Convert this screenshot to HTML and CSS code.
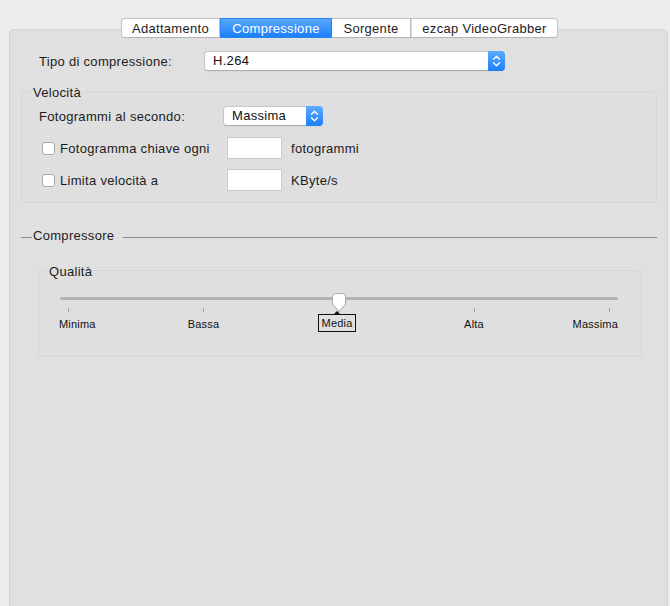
FILE: index.html
```html
<!DOCTYPE html>
<html lang="it">
<head>
<meta charset="utf-8">
<title>Compressione</title>
<link rel="stylesheet" href="styles.css">
</head>
<body>
<div class="window">
  <div class="tab-bar">
    <div class="tab t1">Adattamento</div>
    <div class="tab t2 active">Compressione</div>
    <div class="tab t3">Sorgente</div>
    <div class="tab t4">ezcap VideoGrabber</div>
  </div>
  <div class="panel">
    <div class="row-top">
      <span class="lbl-top">Tipo di compressione:</span>
      <div class="popup popup-wide">
        <span class="popup-text">H.264</span>
        <span class="stepper"><svg width="17" height="20" viewBox="0 0 17 20"><path d="M5.5 8.3 L8.5 5.3 L11.5 8.3 M5.5 11.7 L8.5 14.7 L11.5 11.7" fill="none" stroke="#fff" stroke-width="1.3" stroke-linecap="round" stroke-linejoin="round"/></svg></span>
      </div>
    </div>

    <fieldset class="group group-speed">
      <legend class="g-legend leg-speed">Velocità</legend>
      <div class="row-fps">
        <span class="lbl-fps">Fotogrammi al secondo:</span>
        <div class="popup popup-small">
          <span class="popup-text">Massima</span>
          <span class="stepper"><svg width="17" height="20" viewBox="0 0 17 20"><path d="M5.5 8.3 L8.5 5.3 L11.5 8.3 M5.5 11.7 L8.5 14.7 L11.5 11.7" fill="none" stroke="#fff" stroke-width="1.3" stroke-linecap="round" stroke-linejoin="round"/></svg></span>
        </div>
      </div>
      <div class="row-check first">
        <span class="check"><span class="box"></span>Fotogramma chiave ogni</span>
        <span class="field"></span>
        <span class="unit">fotogrammi</span>
      </div>
      <div class="row-check second">
        <span class="check"><span class="box"></span>Limita velocità a</span>
        <span class="field"></span>
        <span class="unit">KByte/s</span>
      </div>
    </fieldset>

    <div class="sep">
      <span class="sep-line short"></span>
      <span class="sep-label">Compressore</span>
      <span class="sep-line long"></span>
    </div>

    <fieldset class="group group-quality">
      <legend class="g-legend leg-quality">Qualità</legend>
      <div class="slider">
        <div class="track"></div>
        <div class="ticks">
          <span class="tick"></span><span class="tick"></span><span class="tick"></span><span class="tick"></span><span class="tick"></span>
        </div>
        <div class="labels">
          <span class="lab l-min">Minima</span>
          <span class="lab l-bassa">Bassa</span>
          <span class="lab l-alta">Alta</span>
          <span class="lab l-max">Massima</span>
        </div>
        <span class="tip">Media</span>
        <svg class="knob" width="16" height="20" viewBox="0 0 16 20"><path d="M1.5 3.5 A3 3 0 0 1 4.5 0.5 H11.5 A3 3 0 0 1 14.5 3.5 V11 L8 18.5 L1.5 11 Z" fill="#fff" stroke="#a8a8a8" stroke-width="1"/></svg>
      </div>
    </fieldset>
  </div>
</div>
</body>
</html>
```

FILE: styles.css
```css
html, body {
  margin: 0;
  overflow: hidden;
}

body {
  background: #ececec;
  font-family: "Liberation Sans", Arial, sans-serif;
  font-size: 13px;
  color: #1c1c1c;
  letter-spacing: 0.3px;
}

.window {
  padding-top: 18px;
}

/* tabs */
.tab-bar {
  display: flex;
  margin-left: 121px;
  height: 20px;
  position: relative;
  z-index: 1;
  margin-bottom: -9px;
}

.tab {
  height: 20px;
  box-sizing: border-box;
  border: 1px solid #c3c3c3;
  border-left-color: #d6d6d6;
  border-left-width: 0;
  border-bottom-color: #b4b4b4;
  background: #fff;
  display: flex;
  align-items: center;
  justify-content: center;
}

.tab + .tab {
  border-left-width: 1px;
}

.t1 { width: 99px; border-left-width: 1px; border-left-color: #c3c3c3; border-radius: 4px 0 0 4px; }
.t2 { width: 112px; }
.t3 { width: 79px; }
.t4 { width: 147px; border-radius: 0 4px 4px 0; }

.tab.active {
  background: linear-gradient(#5aa8fc, #1a7ffb);
  border-color: #2a86f6;
  color: #fff;
}

.tab.active + .tab {
  border-left-width: 0;
}

/* panel */
.panel {
  margin-left: 9px;
  width: 659px;
  height: 590px;
  box-sizing: border-box;
  border: 1px solid #d3d3d3;
  border-radius: 5px;
  background: #e0e0e0;
  padding-top: 21px;
}

.row-top {
  display: flex;
  align-items: center;
  height: 20px;
  padding-left: 29px;
}

.lbl-top {
  width: 165px;
  flex: none;
}

.popup {
  display: flex;
  height: 20px;
  box-sizing: border-box;
  background: #fff;
  border: 1px solid #c6c6c6;
  border-bottom-color: #ababab;
  border-radius: 4px;
  box-shadow: 0 1px 1px rgba(0, 0, 0, 0.04);
}

.popup-wide { width: 301px; }
.popup-small { width: 100px; }

.popup-text {
  flex: 1;
  padding-left: 8px;
  line-height: 18px;
  color: #111;
}

.stepper {
  width: 17px;
  margin: -1px -1px -1px 0;
  border-radius: 0 4px 4px 0;
  background: linear-gradient(#5eabfc, #1c7ffb);
  display: flex;
  align-items: center;
  justify-content: center;
}

.stepper svg { display: block; }

/* group boxes */
.group {
  min-width: 0;
  border: 1px solid #d5d5d5;
  border-radius: 4px;
  background: #dfdfdf;
}

.g-legend {
  padding: 3px 2px 0;
  line-height: 16px;
}

.group-speed {
  margin: 11px 10px 0 11px;
  padding: 5px 0 11px 0;
}

.leg-speed { margin-left: 9px; }

.row-fps {
  display: flex;
  align-items: center;
  height: 20px;
  padding-left: 17px;
}

.lbl-fps {
  width: 184px;
  flex: none;
}

.row-check {
  display: grid;
  grid-template-columns: 179px 55px auto;
  column-gap: 9px;
  align-items: center;
  height: 22px;
  padding-left: 17px;
}

.row-check.first { margin-top: 11px; }
.row-check.second { margin-top: 10px; }

.check {
  display: flex;
  align-items: center;
  padding-left: 3px;
}

.box {
  width: 13px;
  height: 13px;
  box-sizing: border-box;
  border: 1px solid #a9a9a9;
  border-radius: 3px;
  background: #fff;
  margin-right: 5px;
  flex: none;
}

.field {
  height: 22px;
  box-sizing: border-box;
  background: #fff;
  border: 1px solid #cacaca;
}

/* separator */
.sep {
  display: flex;
  align-items: center;
  height: 16px;
  margin: 24px 10px 0 11px;
}

.sep-line {
  height: 1px;
  background: #8c8c8c;
  margin-top: 4px;
}

.sep-line.short { width: 11px; flex: none; }
.sep-line.long { flex: 1; }

.sep-label {
  padding: 0 9px 0 1px;
}

/* quality */
.group-quality {
  margin: 18px 25px 0 28px;
  padding: 13px 0 23px 0;
}

.leg-quality { margin-left: 8px; }

.slider {
  position: relative;
  margin-left: 21px;
  width: 558px;
  height: 36px;
  padding-top: 4px;
}

.track {
  height: 3px;
  border-radius: 2px;
  background: #b3b3b3;
}

.ticks {
  display: flex;
  justify-content: space-between;
  padding: 0 8px 0 8px;
  margin-top: 8px;
}

.tick {
  width: 1px;
  height: 4px;
  background: #a3a3a3;
}

.labels {
  position: relative;
  height: 13px;
  margin-top: 6px;
  font-size: 11px;
  line-height: 13px;
  letter-spacing: 0.2px;
  color: #111;
}

.lab {
  position: absolute;
  top: 0;
  white-space: nowrap;
}

.l-min { left: -1px; }
.l-bassa { left: 143.5px; transform: translateX(-50%); }
.l-alta { left: 414px; transform: translateX(-50%); }
.l-max { right: 0; }

.tip {
  position: absolute;
  left: 258px;
  top: 21px;
  width: 38px;
  height: 18px;
  box-sizing: border-box;
  border: 1px solid #111;
  background: #e0e0e0;
  font-size: 11px;
  line-height: 16px;
  letter-spacing: 0.2px;
  text-align: center;
  color: #111;
}

.tip::before {
  content: "";
  position: absolute;
  left: 15px;
  top: -4px;
  border-left: 3px solid transparent;
  border-right: 3px solid transparent;
  border-bottom: 3px solid #111;
}

.knob {
  position: absolute;
  left: 271px;
  top: 0;
  display: block;
}
```
